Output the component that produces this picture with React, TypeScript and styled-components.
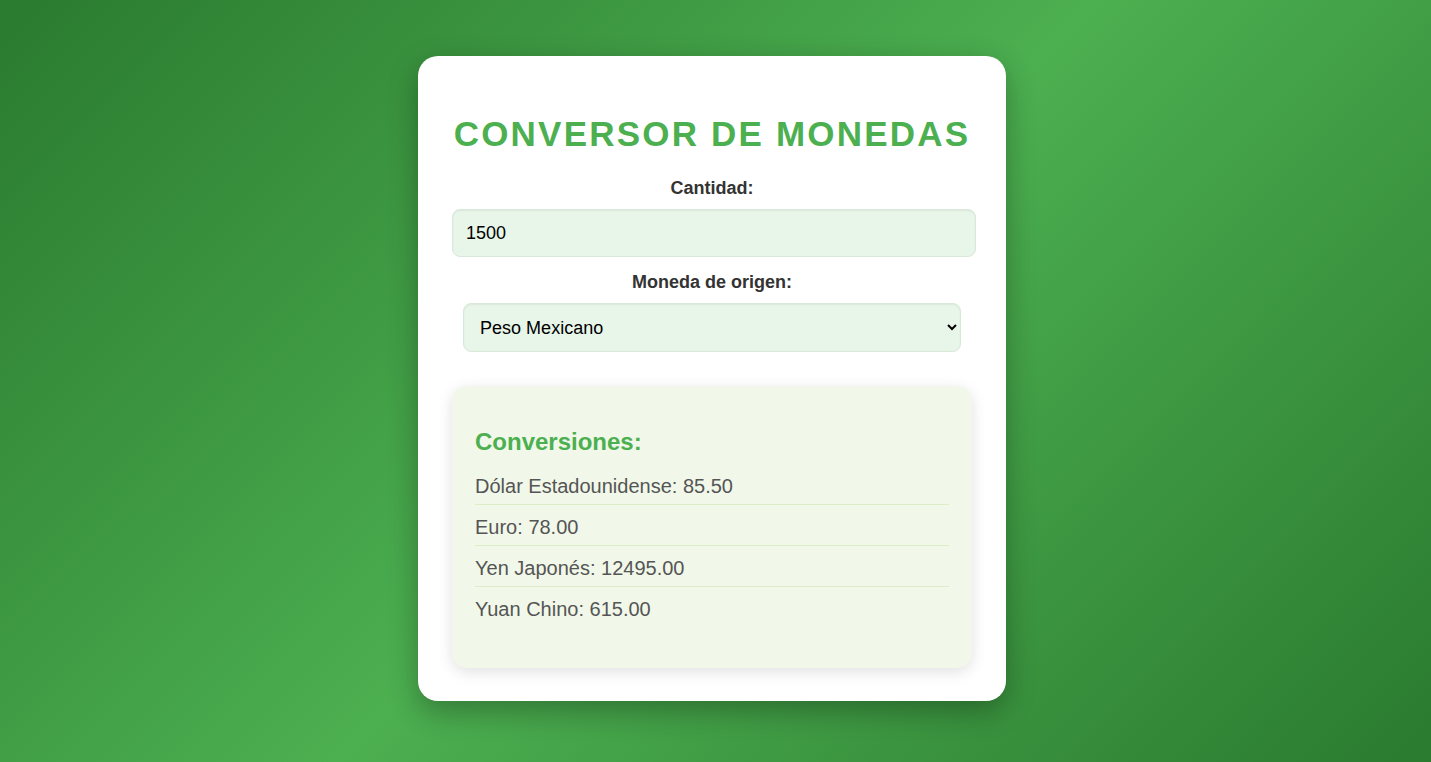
import React, { useState } from "react";
import styled, { createGlobalStyle } from "styled-components";

const GlobalStyle = createGlobalStyle`
  * { box-sizing: border-box; }
  html, body { margin: 0; padding: 0; }
  body {
    font-family: "Liberation Sans", Arial, sans-serif;
    min-height: 762px;
    background: linear-gradient(135deg, #2a7a2f 0%, #4caf50 50%, #2a7a2f 100%);
  }
`;

const Page = styled.main`
  min-height: 762px;
  display: flex;
  justify-content: center;
  align-items: flex-start;
  padding: 56px 7px 0 0;
`;

const Card = styled.section`
  width: 588px;
  background: #ffffff;
  border-radius: 20px;
  padding: 35px 34px 33px;
  box-shadow: 0 10px 30px rgba(0, 0, 0, 0.3);
  display: flex;
  flex-direction: column;
  align-items: center;
`;

const Title = styled.h1`
  margin: 23px 0 24px;
  font-size: 35px;
  font-weight: 700;
  letter-spacing: 2.2px;
  color: #4caf50;
  text-transform: uppercase;
  text-align: center;
  white-space: nowrap;
`;

const Label = styled.label`
  display: block;
  font-size: 18px;
  font-weight: 700;
  color: #333;
  margin-bottom: 10px;
  text-align: center;
`;

const Field = styled.div`
  width: 100%;
  display: flex;
  flex-direction: column;
  align-items: center;
  margin-bottom: 15px;
`;

const Input = styled.input`
  align-self: flex-start;
  width: calc(100% + 4px);
  height: 48px;
  padding: 0 13px;
  font-size: 18px;
  font-family: "Liberation Sans", Arial, sans-serif;
  color: #000;
  background: #e8f5e9;
  border: 1px solid #d8e8d9;
  border-radius: 8px;
  box-shadow: inset 0 1px 2px rgba(0, 0, 0, 0.06);
  outline: none;
`;

const Select = styled.select`
  width: calc((100% + 4px) * 0.95);
  height: 49px;
  padding: 0 12px;
  font-size: 18px;
  font-family: "Liberation Sans", Arial, sans-serif;
  color: #000;
  background: #e8f5e9;
  border: 1px solid #d8e8d9;
  border-radius: 8px;
  box-shadow: inset 0 1px 2px rgba(0, 0, 0, 0.06);
  outline: none;
`;

const Results = styled.div`
  width: 100%;
  margin-top: 19px;
  background: #f1f8e9;
  border-radius: 15px;
  padding: 25px 23px 24px;
  box-shadow: 0 4px 15px rgba(0, 0, 0, 0.12);
`;

const ResultsTitle = styled.h3`
  margin: 17px 0 9px;
  font-size: 24px;
  font-weight: 700;
  color: #4caf50;
`;

const List = styled.ul`
  list-style: none;
  margin: 0 0 17px;
  padding: 0;
`;

const Item = styled.li`
  font-size: 20px;
  line-height: 24px;
  color: #555;
  padding: 10px 0 6px;
  border-bottom: 1px solid #dcedc8;
  &:first-child { padding-top: 9px; }
  &:last-child { border-bottom: none; }
`;

const rates = [
  { name: "Dólar Estadounidense", value: "85.50" },
  { name: "Euro", value: "78.00" },
  { name: "Yen Japonés", value: "12495.00" },
  { name: "Yuan Chino", value: "615.00" },
];

export default function App() {
  const [amount, setAmount] = useState("1500");
  const [currency, setCurrency] = useState("MXN");
  return (
    <>
      <GlobalStyle />
      <Page>
        <Card>
          <Title>Conversor de Monedas</Title>
          <Field>
            <Label htmlFor="cantidad">Cantidad:</Label>
            <Input id="cantidad" type="text" value={amount} onChange={(e) => setAmount(e.target.value)} />
          </Field>
          <Field>
            <Label htmlFor="moneda">Moneda de origen:</Label>
            <Select id="moneda" value={currency} onChange={(e) => setCurrency(e.target.value)}>
              <option value="MXN">Peso Mexicano</option>
              <option value="USD">Dólar Estadounidense</option>
              <option value="EUR">Euro</option>
              <option value="JPY">Yen Japonés</option>
              <option value="CNY">Yuan Chino</option>
            </Select>
          </Field>
          <Results>
            <ResultsTitle>Conversiones:</ResultsTitle>
            <List>
              {rates.map((r) => (
                <Item key={r.name}>
                  {r.name}: {r.value}
                </Item>
              ))}
            </List>
          </Results>
        </Card>
      </Page>
    </>
  );
}
